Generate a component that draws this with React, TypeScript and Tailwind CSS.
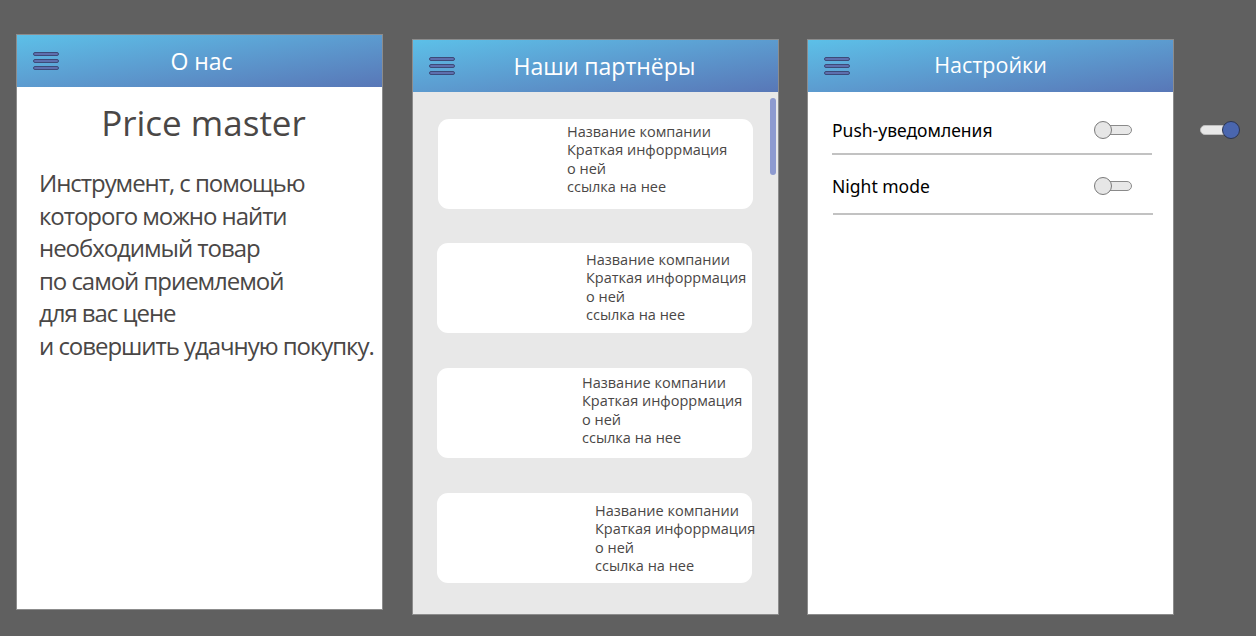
import React from "react";

const sans = { fontFamily: '"Open Sans", "Noto Sans", sans-serif' };

function Burger() {
  return (
    <div className="flex flex-col gap-[3px]">
      {[0, 1, 2].map((i) => (
        <div
          key={i}
          className="h-[4px] w-[26px] rounded-full border border-[#3d4a78] bg-[#5d6fae]"
        />
      ))}
    </div>
  );
}

function Header({ title, offset }: { title: string; offset: string }) {
  return (
    <div className="relative flex h-[52px] items-center bg-linear-to-br from-[#5cc0e8] to-[#5877b7]">
      <div className="absolute left-[16px] top-[17px]">
        <Burger />
      </div>
      <div className={`w-full text-center text-white ${offset}`}>{title}</div>
    </div>
  );
}

function Toggle({ on }: { on?: boolean }) {
  return (
    <div className="relative h-[18px] w-[40px]">
      <div
        className={`absolute top-[4px] h-[10px] rounded-full border bg-[#e8e8e8] ${
          on ? "left-0 w-[30px] border-[#bdbdbd]" : "left-[8px] w-[30px] border-[#8a8a8a]"
        }`}
      />
      <div
        className={`absolute top-0 h-[18px] w-[18px] rounded-full border ${
          on ? "right-0 border-[#2c3550] bg-[#4a66ae]" : "left-0 border-[#7a7a7a] bg-[#e6e6e6]"
        }`}
      />
    </div>
  );
}

function PartnerCard({ pad }: { pad: string }) {
  return (
    <div className={`h-[90px] w-[315px] rounded-[11px] bg-white ${pad}`}>
      <div className="whitespace-nowrap text-[14.5px] leading-[18.3px] text-[#4a4746]">
        <div>Название компании</div>
        <div>Краткая инфоррмация</div>
        <div>о ней</div>
        <div>ссылка на нее</div>
      </div>
    </div>
  );
}

export default function App() {
  return (
    <div className="flex h-[636px] w-[1256px] items-start bg-[#606060] pl-[16px] pt-[34px]" style={sans}>
      {/* О нас */}
      <div className="h-[576px] w-[367px] border border-[#8c8c8c] bg-white">
        <Header title="О нас" offset="pl-[4px] text-[23px]" />
        <div className="pl-[8px] pt-[14px] text-center text-[35px] leading-[44px] text-[#4a4746]">Price master</div>
        <div className="mt-[22px] pl-[22px] text-[24px] leading-[32.6px] tracking-[-1.05px] text-[#4a4746]">
          <div>Инструмент, с помощью</div>
          <div>которого можно найти</div>
          <div>необходимый товар</div>
          <div>по самой приемлемой</div>
          <div>для вас цене</div>
          <div>и совершить удачную покупку.</div>
        </div>
      </div>

      {/* Наши партнёры */}
      <div className="ml-[29px] mt-[5px] h-[576px] w-[367px] border border-[#8c8c8c] bg-[#e8e8e8]">
        <Header title="Наши партнёры" offset="pl-[18px] text-[23px]" />
        <div className="relative flex flex-col pl-[24px] pt-[27px]">
          <div className="absolute right-[2px] top-[6px] h-[77px] w-[6px] rounded-full bg-[#8d9ad0]" />
          <div className="pl-[1px]">
            <PartnerCard pad="pl-[129px] pt-[4px]" />
          </div>
          <div className="mt-[34px]">
            <PartnerCard pad="pl-[149px] pt-[8px]" />
          </div>
          <div className="mt-[35px]">
            <PartnerCard pad="pl-[145px] pt-[6px]" />
          </div>
          <div className="mt-[35px]">
            <PartnerCard pad="pl-[158px] pt-[9px]" />
          </div>
        </div>
      </div>

      {/* Настройки */}
      <div className="ml-[28px] mt-[5px] h-[576px] w-[367px] border border-[#8c8c8c] bg-white">
        <Header title="Настройки" offset="text-[21.5px] pb-[1px]" />
        <div className="pl-[24px] pt-[26px] text-black" style={{ fontFamily: '"Noto Sans", "Open Sans", sans-serif' }}>
          <div className="flex h-[24px] w-[320px] items-center">
            <span className="text-[17.5px]">Push-уведомления</span>
            <div className="ml-auto mr-[18px]">
              <Toggle />
            </div>
          </div>
          <div className="mt-[11px] h-[2px] w-[320px] bg-[#c2c2c2]" />
          <div className="mt-[19px] flex h-[24px] w-[320px] items-center">
            <span className="text-[17.5px]">Night mode</span>
            <div className="ml-auto mr-[18px]">
              <Toggle />
            </div>
          </div>
          <div className="ml-[1px] mt-[15px] h-[2px] w-[320px] bg-[#c2c2c2]" />
        </div>
      </div>

      <div className="ml-[26px] mt-[87px]">
        <Toggle on />
      </div>
    </div>
  );
}
